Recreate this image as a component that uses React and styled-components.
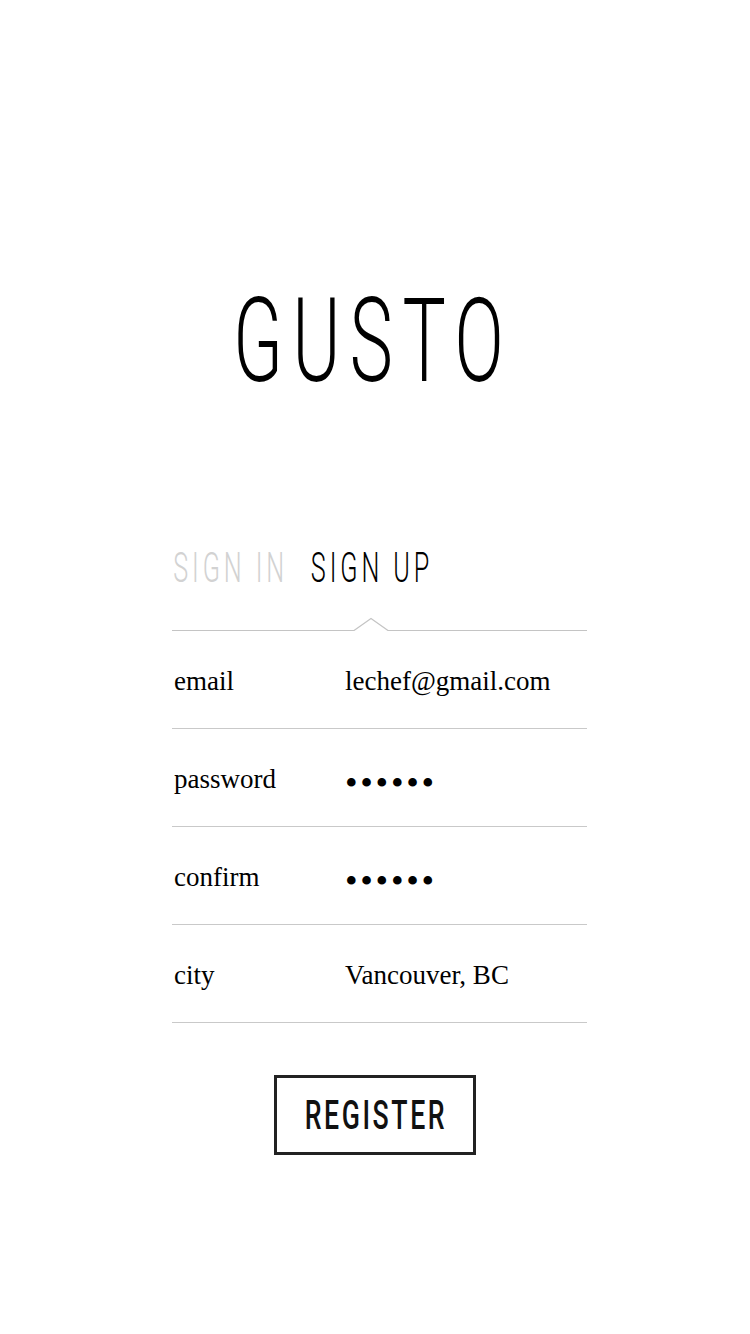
import styled, { createGlobalStyle } from "styled-components";

const GlobalStyle = createGlobalStyle`
  html, body {
    margin: 0;
    padding: 0;
    background: #ffffff;
  }
`;

const Page = styled.div`
  width: 750px;
  min-height: 1334px;
  display: flex;
  flex-direction: column;
  align-items: center;
  background: #fff;
`;

// condensed headline type: Roboto squeezed horizontally
const Logo = styled.h1`
  margin: 283px 13px 0 0;
  font-family: Roboto, "Liberation Sans", sans-serif;
  font-weight: 300;
  font-size: 117px;
  line-height: 117px;
  letter-spacing: 15.5px;
  padding-left: 15.5px;
  color: #000;
  transform: scaleX(0.62);
  transform-origin: center;
  white-space: nowrap;
`;

const Form = styled.div`
  width: 415px;
  margin: 147px 0 0 9px;
  display: flex;
  flex-direction: column;
`;

const Tabs = styled.div`
  display: flex;
  height: 42px;
  padding-left: 2px;
  margin-bottom: 28px;
  transform: scaleX(0.6);
  transform-origin: left center;
  white-space: nowrap;
`;

const Tab = styled.span`
  font-family: Roboto, "Liberation Sans", sans-serif;
  font-weight: 300;
  font-size: 42px;
  line-height: 42px;
  letter-spacing: 6.5px;
  color: ${(p) => (p.active ? "#000" : "#d2d2d2")};
  margin-right: 38px;
`;

const Divider = styled.svg`
  display: block;
  width: 415px;
  height: 14px;
`;

const Row = styled.div`
  display: grid;
  grid-template-columns: 171px 1fr;
  align-items: center;
  height: 97px;
  border-bottom: 1px solid #c9c9c9;
  padding-left: 2px;
  font-family: "Liberation Serif", "Times New Roman", serif;
  font-size: 27px;
  color: #000;
`;

const Label = styled.span`
  padding-top: 4px;
`;

const Value = styled.span`
  padding-top: 4px;
  ${(p) =>
    p.masked &&
    `
    font-size: 36px;
    line-height: 36px;
    letter-spacing: 2.7px;
    padding-top: 10px;
  `}
`;

const Button = styled.button`
  margin-top: 52px;
  width: 202px;
  height: 80px;
  box-sizing: border-box;
  border: 3px solid #222;
  background: #fff;
  display: flex;
  align-items: center;
  justify-content: center;
  padding: 0;
  cursor: pointer;
`;

const ButtonText = styled.span`
  font-family: Roboto, "Liberation Sans", sans-serif;
  font-weight: 500;
  font-size: 41px;
  line-height: 41px;
  letter-spacing: 4px;
  padding-left: 4px;
  color: #111;
  transform: scaleX(0.65);
  white-space: nowrap;
`;

const fields = [
  { label: "email", value: "lechef@gmail.com" },
  { label: "password", value: "••••••", masked: true },
  { label: "confirm", value: "••••••", masked: true },
  { label: "city", value: "Vancouver, BC" },
];

export default function App() {
  return (
    <Page>
      <GlobalStyle />
      <Logo>GUSTO</Logo>
      <Form>
        <Tabs>
          <Tab>SIGN IN</Tab>
          <Tab active>SIGN UP</Tab>
        </Tabs>
        <Divider viewBox="0 0 415 14">
          <path
            d="M0 13.5 H182 L199 1.5 L216 13.5 H415"
            fill="none"
            stroke="#c4c4c4"
            strokeWidth="1.2"
          />
        </Divider>
        {fields.map((f) => (
          <Row key={f.label}>
            <Label>{f.label}</Label>
            <Value masked={f.masked}>{f.value}</Value>
          </Row>
        ))}
      </Form>
      <Button>
        <ButtonText>REGISTER</ButtonText>
      </Button>
    </Page>
  );
}
